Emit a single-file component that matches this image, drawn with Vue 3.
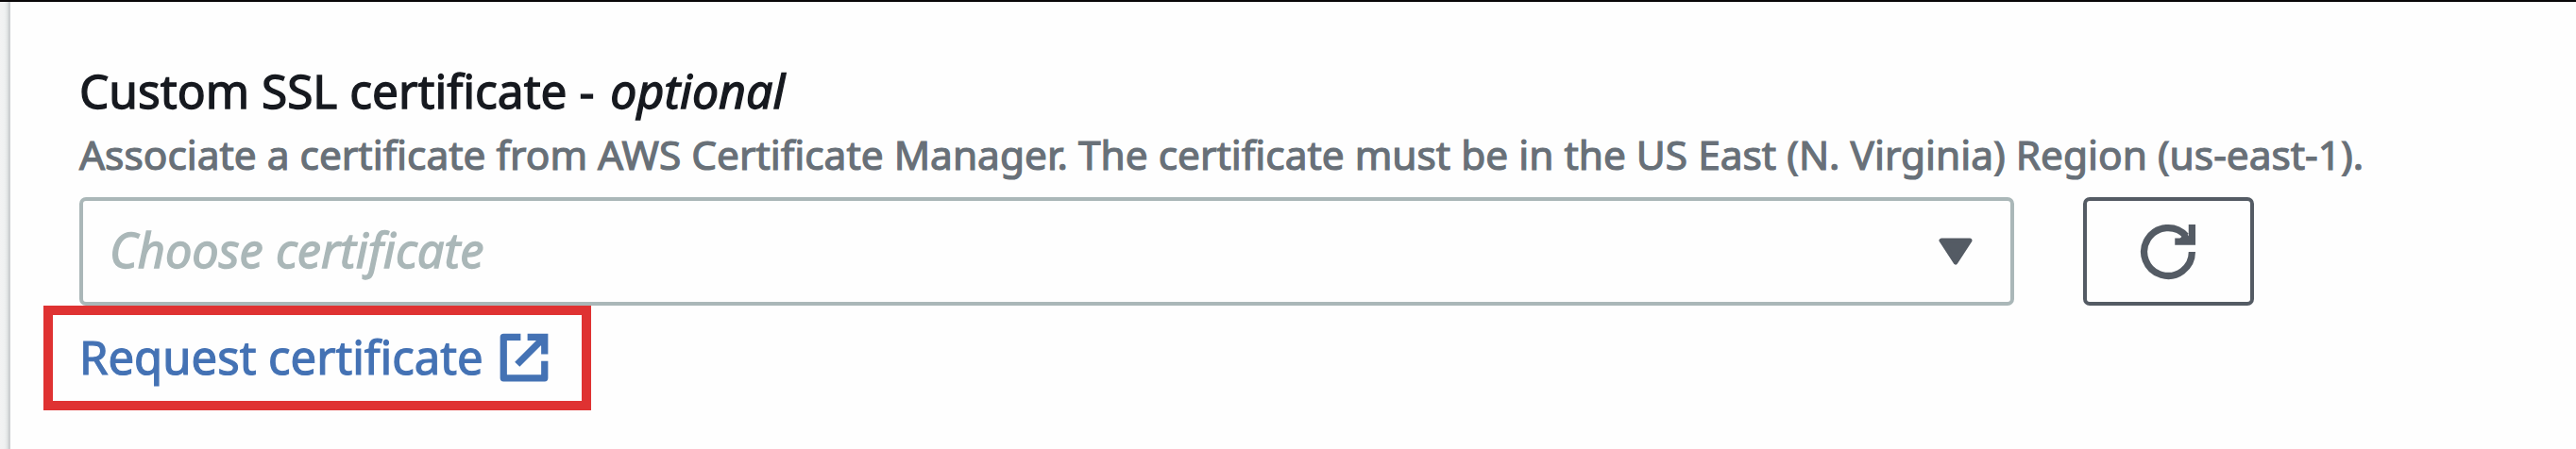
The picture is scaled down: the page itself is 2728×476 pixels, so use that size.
<template>
  <div class="page">
    <div class="gutter"></div>
    <section class="panel">
      <label class="title">Custom SSL certificate - <i>optional</i></label>
      <p class="description">{{ description }}</p>

      <div class="controls">
        <div class="select" role="button" tabindex="0">
          <span class="placeholder">Choose certificate</span>
          <svg class="caret" viewBox="0 0 36 29">
            <path d="M3 3H33L18 26Z" />
          </svg>
        </div>
        <button class="refresh" type="button" aria-label="Refresh">
          <svg viewBox="0 0 16 16">
            <path d="M15 8a7 7 0 1 1-1.75-4.63" />
            <path d="M10 5h5V0" />
            <path class="fill" d="M11.3 4.3L13.1 2.3L15 4.5Z" />
          </svg>
        </button>
      </div>

      <div class="highlight">
        <a class="link">
          <span>Request certificate</span>
          <svg viewBox="0 0 16 16">
            <path class="frame" d="M7 2H2V14H14V9" />
            <path d="M9 2H14V7" />
            <path d="M14 2L6 10" />
            <path class="fill" d="M10.5 2H14V5.5Z" />
          </svg>
        </a>
      </div>
    </section>
  </div>
</template>

<script setup>
const description =
  'Associate a certificate from AWS Certificate Manager. The certificate must be in the US East (N. Virginia) Region (us-east-1).'
</script>

<style>
body {
  overflow: hidden;
}
</style>

<style scoped>
.page {
  display: flex;
  box-sizing: border-box;
  width: 2728px;
  height: 476px;
  border-top: 2px solid #090708;
  background: #fefefe;
  font-family: 'Noto Sans', 'Open Sans', sans-serif;
}

.gutter {
  width: 11px;
  flex-shrink: 0;
  background: linear-gradient(to right, #f2f3f3 0, #eff1f1 5px, #e0e3e3 8px, #c4c8ca 10px, #d8dadb 11px);
}

.panel {
  display: flex;
  flex-direction: column;
  align-items: flex-start;
  padding: 62px 0 0 73px;
}

.title {
  font-size: 49.6px;
  line-height: 64px;
  color: #16191f;
  white-space: nowrap;
  -webkit-text-stroke: 1.3px currentColor;
}

.title i {
  margin-left: 4px;
  font-size: 50px;
}

.description {
  margin: 6px 0 15px;
  font-size: 42.42px;
  line-height: 60px;
  color: #687078;
  white-space: nowrap;
  -webkit-text-stroke: 1.2px currentColor;
}

.controls {
  display: flex;
  gap: 73px;
}

.select {
  display: flex;
  align-items: center;
  justify-content: space-between;
  box-sizing: border-box;
  width: 2049px;
  height: 115px;
  padding: 0 40px 0 28px;
  border: 4px solid #aab7b8;
  border-radius: 7px;
}

.placeholder {
  padding-bottom: 4px;
  font-size: 50.5px;
  font-style: italic;
  color: #aab7b8;
  -webkit-text-stroke: 1.3px currentColor;
}

.caret {
  width: 36px;
  height: 29px;
  fill: #545b64;
  stroke: #545b64;
  stroke-width: 5;
  stroke-linejoin: round;
}

.refresh {
  display: flex;
  align-items: center;
  justify-content: center;
  box-sizing: border-box;
  width: 181px;
  height: 115px;
  padding: 0 2px 0 0;
  border: 4px solid #545b64;
  border-radius: 7px;
  background: none;
}

.refresh svg {
  width: 58px;
  height: 58px;
  overflow: visible;
  fill: none;
  stroke: #545b64;
  stroke-width: 2;
}

.refresh .fill {
  fill: #545b64;
  stroke: none;
}

.highlight {
  box-sizing: border-box;
  width: 580px;
  height: 111px;
  margin-left: -38px;
  padding-left: 28px;
  border: 10px solid #df3232;
}

.link {
  display: flex;
  align-items: center;
  gap: 14px;
  height: 90px;
  font-size: 49px;
  color: #4472b4;
  white-space: nowrap;
  -webkit-text-stroke: 1.2px currentColor;
}

.link span {
  width: 428px;
  padding-bottom: 2px;
}

.link svg {
  width: 58px;
  height: 58px;
  fill: none;
  stroke: currentColor;
  stroke-width: 2;
}

.link .frame {
  stroke-linejoin: round;
}

.link .fill {
  fill: currentColor;
  stroke: none;
}
</style>
